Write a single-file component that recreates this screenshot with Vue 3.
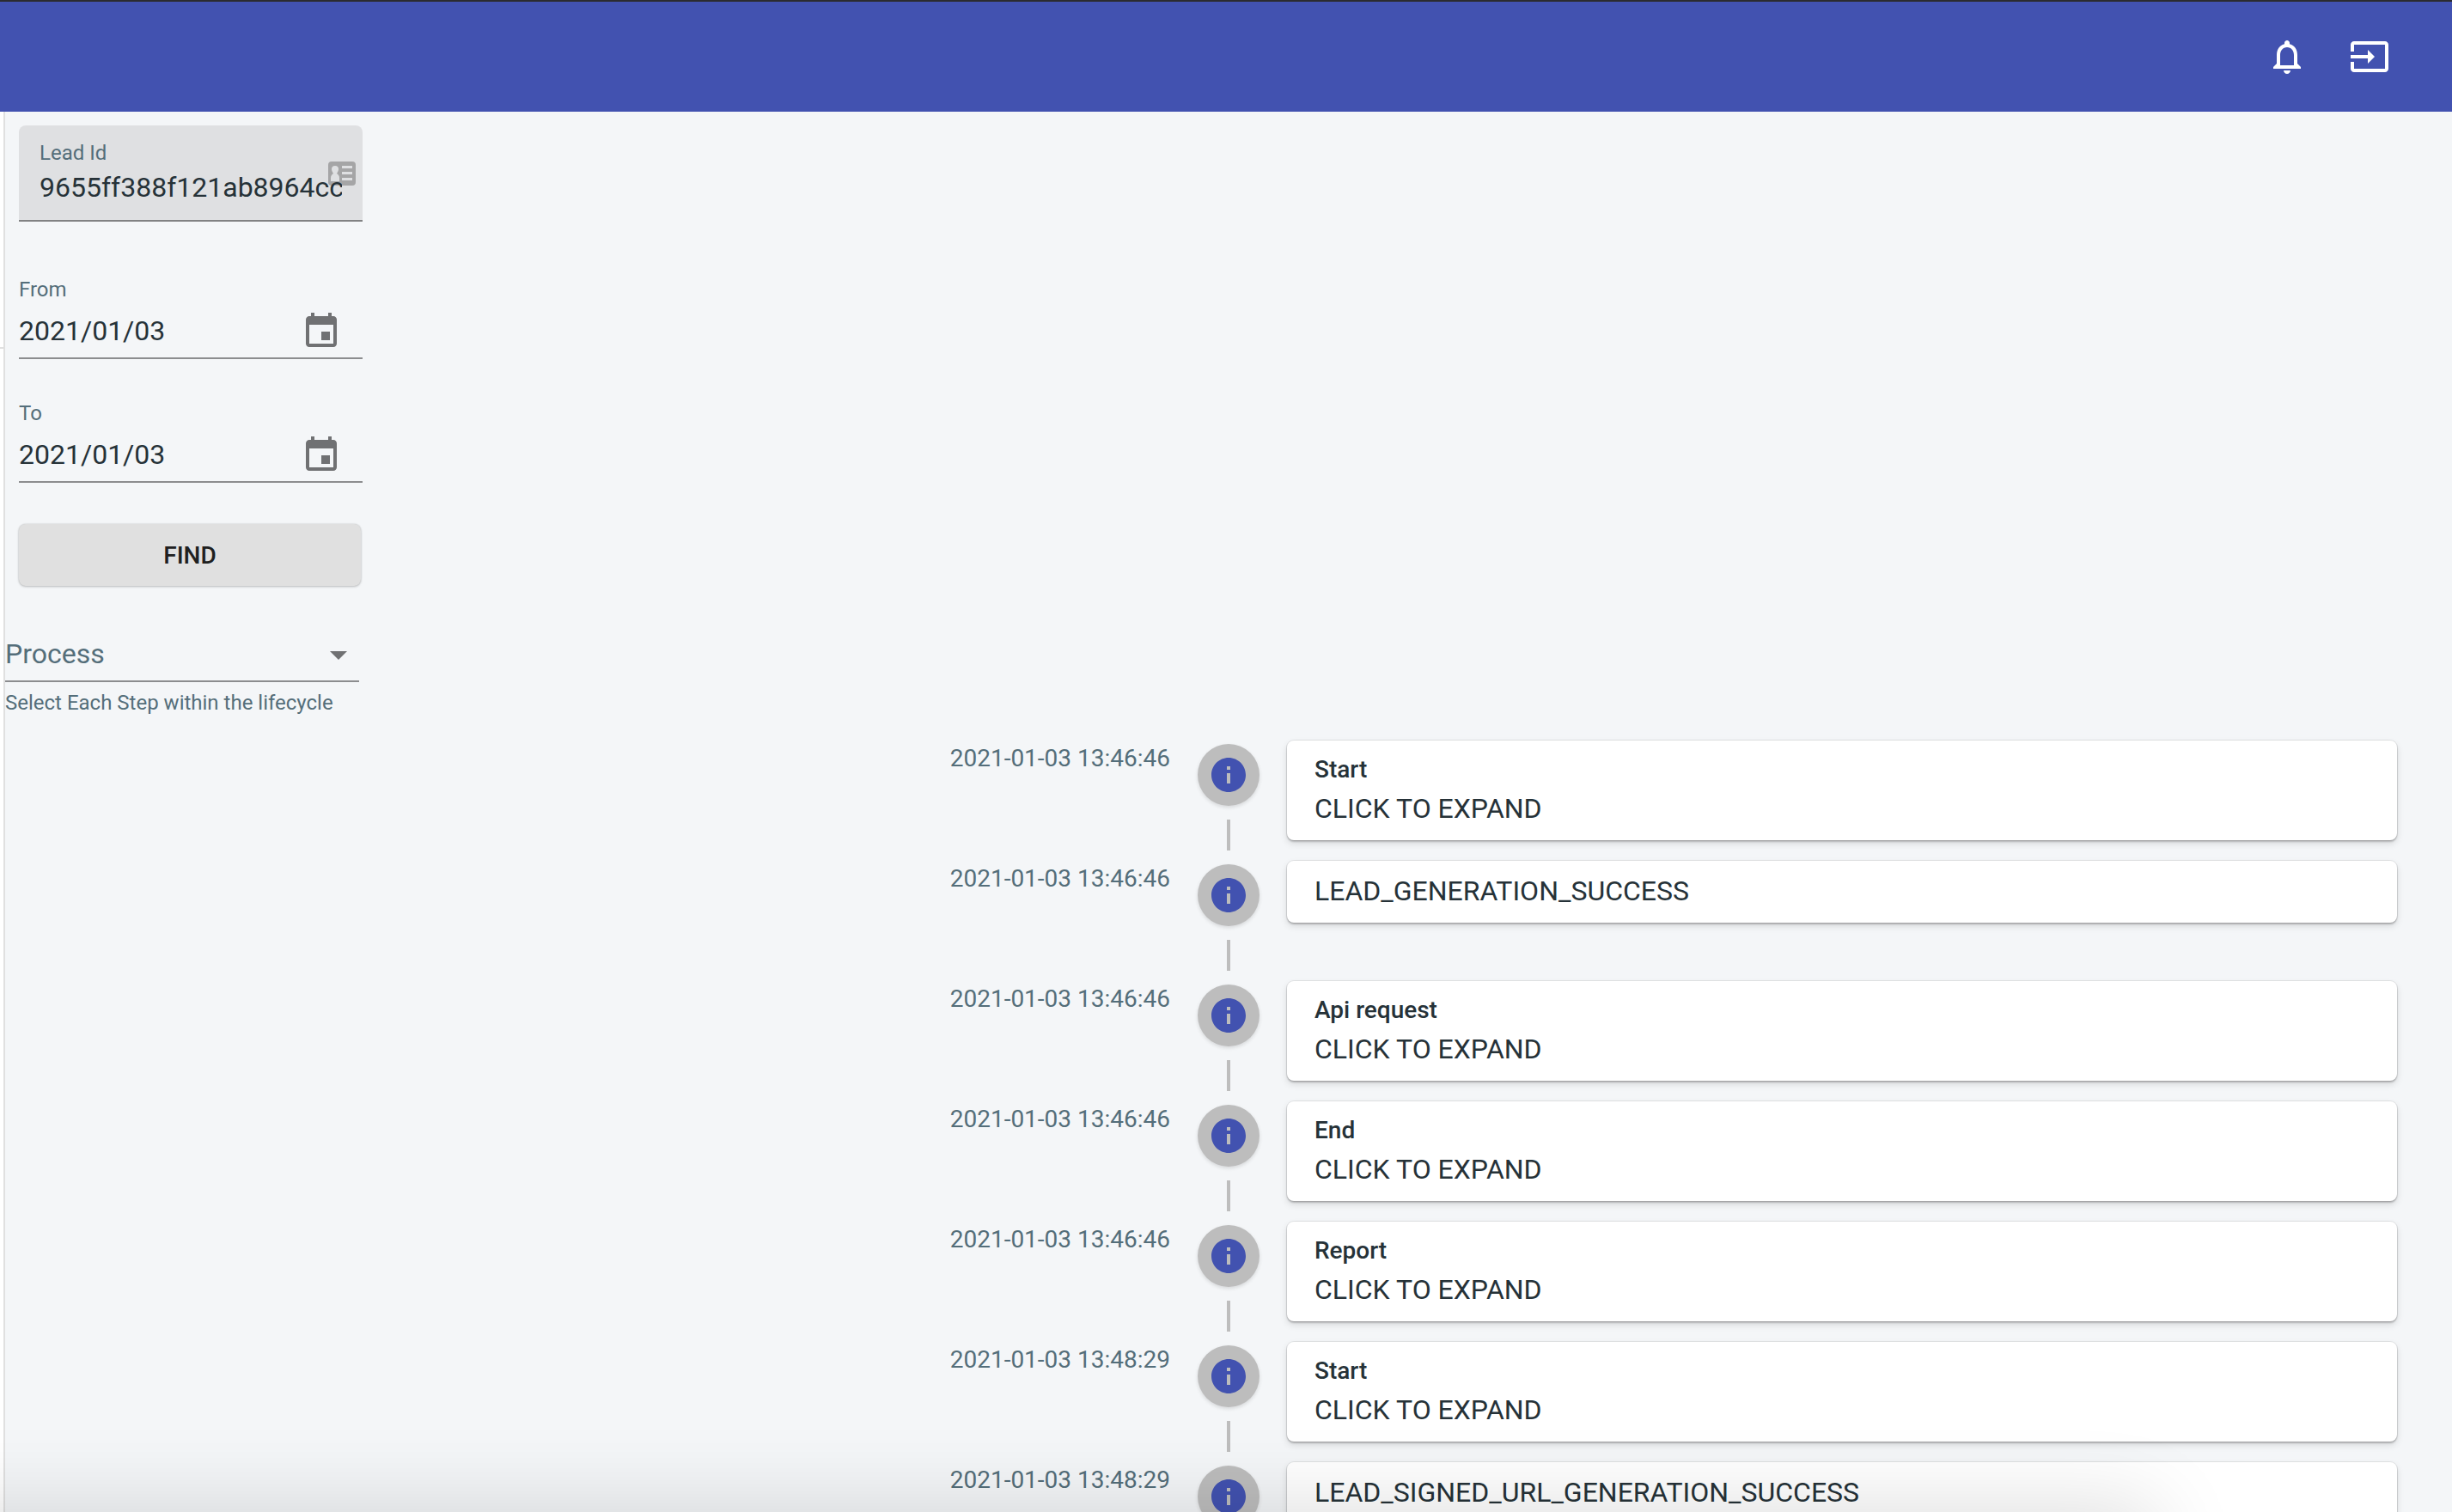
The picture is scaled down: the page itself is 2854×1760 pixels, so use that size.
<script setup>
import { ref } from 'vue'

const leadId = ref('9655ff388f121ab8964cc1e07')
const dates = ref([
  { id: 'from', label: 'From', value: '2021/01/03' },
  { id: 'to', label: 'To', value: '2021/01/03' },
])
const step = ref('')

const events = [
  { time: '2021-01-03 13:46:46', title: 'Start' },
  { time: '2021-01-03 13:46:46', text: 'LEAD_GENERATION_SUCCESS' },
  { time: '2021-01-03 13:46:46', title: 'Api request' },
  { time: '2021-01-03 13:46:46', title: 'End' },
  { time: '2021-01-03 13:46:46', title: 'Report' },
  { time: '2021-01-03 13:48:29', title: 'Start' },
  { time: '2021-01-03 13:48:29', text: 'LEAD_SIGNED_URL_GENERATION_SUCCESS' },
]
</script>

<template>
  <div class="app">
    <header class="bar">
      <button class="icon-btn" type="button" aria-label="Notifications">
        <svg viewBox="0 0 24 24"><path d="M12 22c1.1 0 2-.9 2-2h-4c0 1.1.9 2 2 2zm6-6v-5c0-3.07-1.63-5.64-4.5-6.32V4c0-.83-.67-1.5-1.5-1.5s-1.5.67-1.5 1.5v.68C7.64 5.36 6 7.92 6 11v5l-2 2v1h16v-1l-2-2zm-2 1H8v-6c0-2.48 1.51-4.5 4-4.5s4 2.02 4 4.5v6z" /></svg>
      </button>
      <button class="icon-btn" type="button" aria-label="Log out">
        <svg viewBox="0 0 24 24"><path d="M21 3.01H3c-1.1 0-2 .9-2 2V9h2V4.99h18v14.03H3V15H1v4.01c0 1.1.9 1.98 2 1.98h18c1.1 0 2-.88 2-1.98v-14c0-1.11-.9-2-2-2zM11 16l4-4-4-4v3H1v2h10v3z" /></svg>
      </button>
    </header>

    <div class="body">
      <aside class="drawer"><hr class="drawer-line" /></aside>

      <main class="content">
        <form class="filters" @submit.prevent>
          <div class="filled">
            <label for="lead">Lead Id</label>
            <input id="lead" v-model="leadId" type="text" />
            <svg class="card-icon" viewBox="0 0 32 28" aria-hidden="true">
              <path fill="#a5a5a6" d="M4 0h24a4 4 0 0 1 4 4v20a4 4 0 0 1-4 4H4a4 4 0 0 1-4-4V4a4 4 0 0 1 4-4z" />
              <path fill="#dfe0e2" d="M8 5a4 4 0 0 1 4 4c0 2-1 3-2 5 2 1 3 3 3 5v4H3v-4c0-2 1-4 3-5-1-2-2-3-2-5a4 4 0 0 1 4-4zM16 5h12v3H16zM16 12h12v3H16zM16 19h12v3H16z" />
            </svg>
          </div>

          <div v-for="d in dates" :key="d.id" class="date">
            <label :for="d.id">{{ d.label }}</label>
            <div class="date-row">
              <input :id="d.id" v-model="d.value" type="text" />
              <button type="button" :aria-label="'Choose date ' + d.label">
                <svg viewBox="0 0 24 24"><path d="M17 12h-5v5h5v-5zM16 1v2H8V1H6v2H5c-1.11 0-1.99.9-1.99 2L3 19c0 1.1.89 2 2 2h14c1.1 0 2-.9 2-2V5c0-1.1-.9-2-2-2h-1V1h-2zm3 18H5V8h14v11z" /></svg>
              </button>
            </div>
          </div>

          <button class="find" type="submit">FIND</button>
        </form>

        <div class="process">
          <div class="select-wrap">
            <label for="process">Process</label>
            <select id="process" v-model="step" aria-describedby="process-help">
              <option value=""></option>
            </select>
            <svg viewBox="0 0 24 24" aria-hidden="true"><path d="M7 10l5 5 5-5z" /></svg>
          </div>
          <p id="process-help">Select Each Step within the lifecycle</p>
        </div>

        <ul class="timeline">
          <li v-for="(e, i) in events" :key="i" class="event">
            <time>{{ e.time }}</time>
            <div class="rail">
              <span class="dot">
                <svg viewBox="0 0 24 24"><path d="M12 2C6.48 2 2 6.48 2 12s4.48 10 10 10 10-4.48 10-10S17.52 2 12 2zm1 15h-2v-6h2v6zm0-8h-2V7h2v2z" /></svg>
              </span>
              <span class="connector"></span>
            </div>
            <div class="side">
              <article class="card">
                <template v-if="e.title">
                  <h2>{{ e.title }}</h2>
                  <button type="button">CLICK TO EXPAND</button>
                </template>
                <p v-else>{{ e.text }}</p>
              </article>
            </div>
          </li>
        </ul>
      </main>
    </div>
    <div class="shade"></div>
  </div>
</template>

<style>
body {
  margin: 0;
  background: #f4f6f8;
}
</style>

<style scoped>
.app {
  position: relative;
  display: flex;
  flex-direction: column;
  height: 100vh;
  overflow: hidden;
  font-family: Roboto, "Liberation Sans", sans-serif;
  font-size: 32px;
  color: #263238;
  background: #f4f6f8;
}
.app * {
  box-sizing: border-box;
}
button,
input,
select {
  margin: 0;
  padding: 0;
  border: 0;
  border-radius: 0;
  background: none;
  color: inherit;
  font: inherit;
  outline: none;
}
button {
  cursor: pointer;
}
svg {
  display: block;
  fill: currentColor;
}
.bar {
  display: flex;
  flex: none;
  justify-content: flex-end;
  align-items: center;
  height: 130px;
  padding: 0 48px;
  border-top: 2px solid #2b2b30;
  background: #4252b0;
  color: #fff;
}
.icon-btn {
  padding: 24px;
}
.icon-btn svg {
  width: 48px;
  height: 48px;
}
.body {
  display: flex;
  flex: 1;
  min-height: 0;
}
.drawer {
  flex: none;
  width: 6px;
  padding-top: 274px;
  border-right: 2px solid #e0e0e0;
  background: #fff;
}
.drawer-line {
  height: 2px;
  margin: 0;
  border: 0;
  background: #e0e0e0;
}
.content {
  flex: 1;
  min-width: 0;
  overflow-y: auto;
  scrollbar-width: none;
}
.filters {
  display: flex;
  flex-direction: column;
  width: 432px;
  padding: 16px;
}
label {
  color: #546e7a;
}
.filled {
  position: relative;
  height: 112px;
  padding: 18px 24px 0;
  border-bottom: 2px solid #818283;
  border-radius: 8px 8px 0 0;
  background: #dfe0e2;
}
.filled label {
  display: block;
  font-size: 24px;
  line-height: 28px;
}
.filled input {
  position: relative;
  z-index: 1;
  display: block;
  width: 100%;
  height: 40px;
  margin-top: 6px;
}
.card-icon {
  position: absolute;
  top: 42px;
  right: 8px;
  width: 32px;
  height: 28px;
}
.date {
  height: 96px;
  margin-top: 64px;
  border-bottom: 2px solid #8c8d8f;
}
.date + .date {
  margin-top: 48px;
}
.date label {
  display: block;
  font-size: 24px;
  line-height: 30px;
}
.date-row {
  display: flex;
  align-items: center;
  height: 68px;
}
.date-row input {
  flex: 1;
  min-width: 0;
  padding-bottom: 2px;
}
.date-row button {
  flex: none;
  padding: 0 24px;
  color: #707173;
}
.date-row svg {
  width: 48px;
  height: 48px;
}
.find {
  width: 398px;
  height: 72px;
  margin-top: 48px;
  border-radius: 8px;
  background: #e0e0e0;
  box-shadow: 0 1px 3px rgba(0, 0, 0, 0.2), 0 0 2px rgba(0, 0, 0, 0.16);
  color: #202020;
  font-size: 28px;
  font-weight: 500;
}
.process {
  width: 412px;
  margin-top: 32px;
}
.select-wrap {
  position: relative;
  height: 64px;
  border-bottom: 2px solid #8c8d8f;
}
.select-wrap label {
  position: absolute;
  top: 12px;
  left: 0;
  line-height: 38px;
  pointer-events: none;
}
.select-wrap select {
  width: 100%;
  height: 100%;
  appearance: none;
}
.select-wrap svg {
  position: absolute;
  top: 8px;
  right: 0;
  width: 48px;
  height: 48px;
  color: #707173;
  pointer-events: none;
}
.process p {
  margin: 10px 0 0;
  color: #546e7a;
  font-size: 24px;
  line-height: 28px;
  white-space: nowrap;
}
.timeline {
  margin: 0;
  padding: 18px 32px;
  list-style: none;
}
.event {
  display: flex;
  min-height: 140px;
}
.event time {
  flex: 1;
  padding: 12px 32px;
  color: #546e7a;
  font-size: 28px;
  line-height: 42px;
  text-align: right;
}
.rail {
  display: flex;
  flex: none;
  flex-direction: column;
  align-items: center;
  gap: 16px;
  padding-top: 16px;
}
.dot {
  padding: 12px;
  border-radius: 50%;
  background: #bdbdbd;
  box-shadow: 0 2px 4px rgba(0, 0, 0, 0.12);
  color: #4252b0;
}
.dot svg {
  width: 48px;
  height: 48px;
}
.connector {
  flex: 1;
  width: 4px;
  background: #bdbdbd;
}
.side {
  flex: 1;
  padding: 12px 32px;
}
.card {
  padding: 12px 32px 14px;
  border-radius: 8px;
  background: #fff;
  box-shadow: 0 0 0 1px rgba(0, 0, 0, 0.08), 0 2px 2px rgba(0, 0, 0, 0.2), 0 4px 8px rgba(0, 0, 0, 0.12);
}
.card h2 {
  margin: 0;
  font-size: 28px;
  font-weight: 500;
  line-height: 44px;
}
.card p,
.card button {
  display: block;
  margin: 0;
  line-height: 46px;
}
.shade {
  position: absolute;
  top: 100%;
  left: -100px;
  right: 352px;
  height: 200px;
  box-shadow: 0 0 96px 8px rgba(0, 0, 0, 0.13);
  pointer-events: none;
}
</style>
